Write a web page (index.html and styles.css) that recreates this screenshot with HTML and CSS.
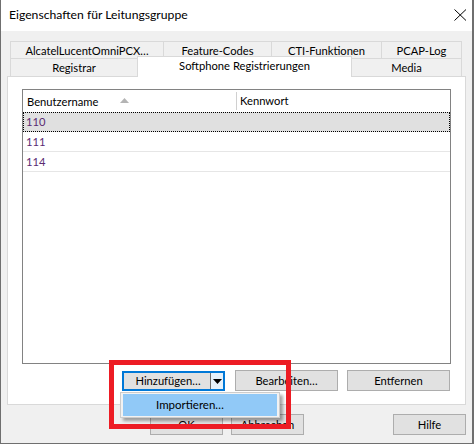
FILE: index.html
```html
<!DOCTYPE html>
<html lang="de">
<head>
<meta charset="utf-8">
<title>Eigenschaften für Leitungsgruppe</title>
<link rel="stylesheet" href="styles.css">
</head>
<body>
<div class="window">
  <div class="titlebar">
    <span class="title">Eigenschaften für Leitungsgruppe</span>
    <svg class="close" width="13" height="12" viewBox="0 0 13 12"><path d="M0.5 0.5 L12 11.5 M12 0.5 L0.5 11.5" stroke="#000" stroke-width="1" fill="none"/></svg>
  </div>
  <div class="content">
    <div class="tabs">
      <div class="tabrow row1">
        <div class="tab t-alcatel">AlcatelLucentOmniPCX…</div>
        <div class="tab t-feature">Feature-Codes</div>
        <div class="tab t-cti">CTI-Funktionen</div>
        <div class="tab t-pcap last">PCAP-Log</div>
      </div>
      <div class="tabrow row2">
        <div class="tab t-registrar">Registrar</div>
        <div class="tab t-softphone selected">Softphone Registrierungen</div>
        <div class="tab t-media last">Media</div>
      </div>
    </div>
    <div class="panel">
      <div class="listview">
        <div class="header">
          <div class="col col1">Benutzername<svg class="sort" width="9" height="5" viewBox="0 0 9 5"><path d="M0 5 L4.5 0 L9 5 Z" fill="#b4b4b4"/></svg></div>
          <div class="col col2">Kennwort</div>
        </div>
        <div class="row sel"><span>110</span></div>
        <div class="row"><span>111</span></div>
        <div class="row"><span>114</span></div>
      </div>
      <div class="actions">
        <div class="btn split">
          <span class="split-main">Hinzufügen…</span>
          <span class="split-arrow"><svg width="9" height="5" viewBox="0 0 9 5"><path d="M0 0 L9 0 L4.5 5 Z" fill="#000"/></svg></span>
        </div>
        <div class="btn b-edit">Bearbeiten…</div>
        <div class="btn b-remove">Entfernen</div>
      </div>
    </div>
    <div class="footer">
      <div class="btn small b-ok">OK</div>
      <div class="btn small b-cancel">Abbrechen</div>
      <div class="spacer"></div>
      <div class="btn small b-help">Hilfe</div>
    </div>
  </div>
  <div class="menu">
    <div class="menu-item">Importieren…</div>
  </div>
  <div class="highlight"></div>
</div>
</body>
</html>
```

FILE: styles.css
```css
* { box-sizing: border-box; }
html, body { margin: 0; padding: 0; background: #f0f0f0; }
body {
  font-family: Lato, "Noto Sans", sans-serif;
  font-size: 11.2px;
  color: #000;
}
.window {
  position: relative;
  width: 474px;
  height: 444px;
  background: #f0f0f0;
  border-left: 1px solid #6f6f6f;
  border-right: 2px solid #6f6f6f;
  border-bottom: 1px solid #6f6f6f;
  overflow: hidden;
}
.titlebar {
  height: 31px;
  background: #fff;
  display: flex;
  align-items: center;
  padding-left: 8px;
  padding-right: 5px;
}
.title { flex: 1; font-size: 12.2px; line-height: 16px; margin-top: -1px; }
.close { margin-top: -1px; }
.content {
  padding: 10px 6px 0 6px;
}
.tabs { margin-left: 3px; width: 452px; }
.tabrow { display: flex; }
.row1 { height: 17px; }
.row2 { height: 18px; position: relative; }
.tab {
  background: #f0f0f0;
  border-top: 1px solid #d9d9d9;
  border-left: 1px solid #d9d9d9;
  text-align: center;
  line-height: 17px;
  white-space: nowrap;
}
.tab.last { border-right: 1px solid #d9d9d9; }
.t-alcatel { width: 153px; }
.t-feature { width: 108px; }
.t-cti { width: 110px; }
.t-pcap { width: 81px; }
.t-registrar { width: 127px; line-height: 18px; }
.t-media { width: 110px; line-height: 18px; }
.tab.selected {
  width: 215px;
  height: 21px;
  margin-top: -2px;
  background: #fff;
  border-right: 1px solid #d9d9d9;
  line-height: 17px;
  z-index: 2;
  position: relative;
}
.t-softphone + .t-media { border-left: none; }
.panel {
  width: 459px;
  height: 329px;
  background: #fff;
  border: 1px solid #d9d9d9;
  padding: 12px 15px 0 14px;
}
.listview {
  width: 429px;
  height: 275px;
  border: 1px solid #828282;
  background: #fff;
}
.header {
  display: flex;
  height: 22px;
  align-items: center;
}
.col { height: 22px; line-height: 21px; }
.col1 { width: 213px; padding-left: 4px; display: flex; align-items: center; }
.sort { margin-left: 22px; margin-top: -2px; }
.col2 { flex: 1; border-left: 1px solid #d0d0d0; padding-left: 3px; height: 18px; line-height: 17px; }
.row {
  height: 20px;
  border-bottom: 1px solid #e6e6e6;
  color: #5a2b72;
  padding-left: 3px;
  line-height: 19px;
}
.row.sel {
  background: #e0e0e0;
  outline: 1px dotted #000;
  outline-offset: -1px;
  border-bottom: 1px solid #e0e0e0;
}
.actions {
  display: flex;
  justify-content: flex-end;
  margin-top: 6px;
  height: 21px;
}
.btn {
  background: #e1e1e1;
  border: 1px solid #adadad;
  height: 21px;
  text-align: center;
  line-height: 19px;
  white-space: nowrap;
}
.split {
  width: 103px;
  display: flex;
  border: 2px solid #0078d7;
  margin-right: 10px;
  height: 20px;
  margin-top: 1px;
}
.split-main { flex: 1; line-height: 16px; text-align: center; padding-left: 2px; }
.split-arrow {
  width: 13px;
  border-left: 1px solid #6e6e6e;
  background: #e5f1fb;
  display: flex;
  align-items: center;
  justify-content: center;
}
.b-edit { width: 103px; margin-right: 9px; }
.b-remove { width: 103px; }
.footer {
  display: flex;
  margin-top: 9px;
  padding-left: 143px;
}
.btn.small { width: 73px; }
.b-ok { margin-right: 8px; }
.spacer { flex: 1; }
.menu {
  position: absolute;
  left: 119px;
  top: 392px;
  width: 160px;
  height: 26px;
  background: #f2f2f2;
  border: 1px solid #cccccc;
  padding: 1px 2px;
  box-shadow: 3px 3px 3px rgba(0,0,0,0.35);
  z-index: 5;
}
.menu-item {
  height: 22px;
  background: #91c9f7;
  padding-left: 33px;
  line-height: 21px;
  font-size: 11.5px;
}
.highlight {
  position: absolute;
  left: 108px;
  top: 360px;
  width: 182px;
  height: 69px;
  border: 5px solid #ed1c24;
  z-index: 6;
}
```
